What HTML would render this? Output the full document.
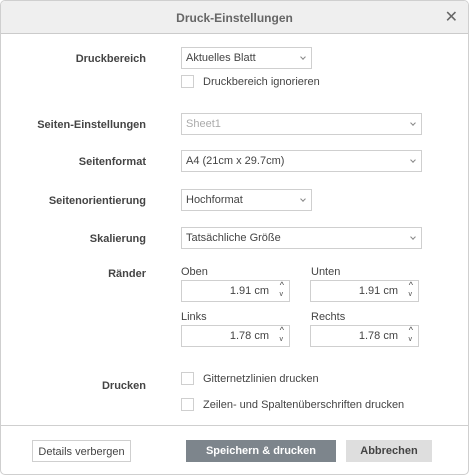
<!DOCTYPE html><html><head><style>
body{margin:0;width:469px;height:475px;background:#fff;font-family:"Liberation Sans",sans-serif;font-size:11px;color:#444;position:relative;overflow:hidden}
.dlg{position:absolute;left:0;top:0;width:467px;height:473px;border:1px solid #cfcfcf;border-radius:5px;overflow:hidden}
.hdr{position:absolute;left:0;top:0;width:467px;height:32px;background:#efefef;border-bottom:1px solid #cbcbcb;text-align:center;line-height:34px;font-size:12px;color:#666;font-weight:bold}
.x{position:absolute;right:10px;top:0;font-size:16px;color:#666;font-weight:normal}
.w{position:absolute;left:0;top:1px;width:469px;height:474px}
.a{position:absolute}
.lbl{position:absolute;right:323px;font-weight:bold;text-align:right;white-space:nowrap}
.sel{position:absolute;border:1px solid #cfcfcf;line-height:20px;padding-left:4px;box-sizing:border-box;height:22px}
.sel:after{content:"";position:absolute;right:6px;top:7px;width:3px;height:3px;border-right:1px solid #888;border-bottom:1px solid #888;transform:rotate(45deg)}
.cb{position:absolute;width:11px;height:11px;border:1px solid #cfcfcf;left:181px}
.ct{position:absolute;left:203px}
.num{position:absolute;border:1px solid #cfcfcf;width:109px;height:22px;box-sizing:border-box;text-align:right;padding-right:20px;line-height:20px}
.num:before{content:"^";position:absolute;right:5px;top:-1px;font-size:9px;line-height:10px}
.num:after{content:"v";position:absolute;right:6px;top:9px;font-size:7px;line-height:10px}
.btn{position:absolute;top:439px;height:22px;line-height:22px;text-align:center;box-sizing:border-box}
</style></head><body><div class="dlg">
<div class="hdr">Druck-Einstellungen<span class="x">✕</span></div></div>
<div class="w">
<div class="lbl" style="top:52px">Druckbereich</div>
<div class="sel" style="left:181px;top:46px;width:131px">Aktuelles Blatt</div>
<div class="cb" style="top:74px"></div><div class="ct" style="top:75px">Druckbereich ignorieren</div>
<div class="lbl" style="top:118px">Seiten-Einstellungen</div>
<div class="sel" style="left:181px;top:112px;width:241px;color:#aaa">Sheet1</div>
<div class="lbl" style="top:155px">Seitenformat</div>
<div class="sel" style="left:181px;top:149px;width:241px">A4 (21cm x 29.7cm)</div>
<div class="lbl" style="top:194px">Seitenorientierung</div>
<div class="sel" style="left:181px;top:188px;width:131px">Hochformat</div>
<div class="lbl" style="top:232px">Skalierung</div>
<div class="sel" style="left:181px;top:226px;width:241px">Tatsächliche Größe</div>
<div class="lbl" style="top:267px">Ränder</div>
<div class="a" style="left:181px;top:265px">Oben</div><div class="a" style="left:311px;top:265px">Unten</div>
<div class="num" style="left:181px;top:279px">1.91 cm</div><div class="num" style="left:310px;top:279px">1.91 cm</div>
<div class="a" style="left:181px;top:310px">Links</div><div class="a" style="left:311px;top:310px">Rechts</div>
<div class="num" style="left:181px;top:324px">1.78 cm</div><div class="num" style="left:310px;top:324px">1.78 cm</div>
<div class="lbl" style="top:379px">Drucken</div>
<div class="cb" style="top:371px"></div><div class="ct" style="top:372px">Gitternetzlinien drucken</div>
<div class="cb" style="top:397px"></div><div class="ct" style="top:398px">Zeilen- und Spaltenüberschriften drucken</div>
<div class="a" style="left:1px;top:424px;width:467px;border-top:1px solid #cfcfcf"></div>
<div class="btn" style="left:32px;width:99px;border:1px solid #cfcfcf;color:#444">Details verbergen</div>
<div class="btn" style="left:186px;width:150px;background:#7d858c;color:#fff;font-weight:bold">Speichern &amp; drucken</div>
<div class="btn" style="left:346px;width:86px;background:#dedede;color:#444;font-weight:bold">Abbrechen</div>
</div>
</body></html>
